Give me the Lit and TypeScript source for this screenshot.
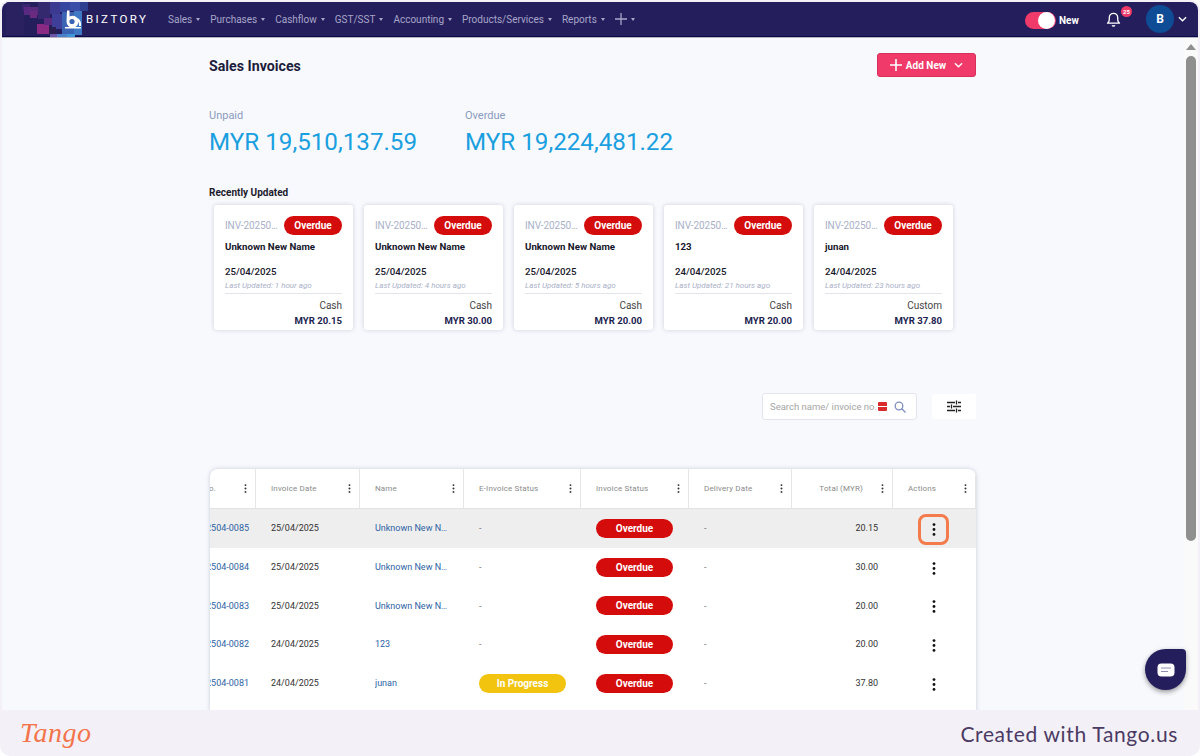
import { LitElement, html, css, svg } from "lit";
import { customElement } from "lit/decorators.js";

const NAV = ["Sales", "Purchases", "Cashflow", "GST/SST", "Accounting", "Products/Services", "Reports"];

const CARDS = [
  { name: "Unknown New Name", date: "25/04/2025", ago: "1 hour ago", method: "Cash", total: "MYR 20.15" },
  { name: "Unknown New Name", date: "25/04/2025", ago: "4 hours ago", method: "Cash", total: "MYR 30.00" },
  { name: "Unknown New Name", date: "25/04/2025", ago: "5 hours ago", method: "Cash", total: "MYR 20.00" },
  { name: "123", date: "24/04/2025", ago: "21 hours ago", method: "Cash", total: "MYR 20.00" },
  { name: "junan", date: "24/04/2025", ago: "23 hours ago", method: "Custom", total: "MYR 37.80" },
];

const COLUMNS = ["Invoice No.", "Invoice Date", "Name", "E-Invoice Status", "Invoice Status", "Delivery Date", "Total (MYR)", "Actions"];

const ROWS = [
  { no: "INV-202504-0085", date: "25/04/2025", name: "Unknown New Name", einv: "", total: "20.15" },
  { no: "INV-202504-0084", date: "25/04/2025", name: "Unknown New Name", einv: "", total: "30.00" },
  { no: "INV-202504-0083", date: "25/04/2025", name: "Unknown New Name", einv: "", total: "20.00" },
  { no: "INV-202504-0082", date: "24/04/2025", name: "123", einv: "", total: "20.00" },
  { no: "INV-202504-0081", date: "24/04/2025", name: "junan", einv: "In Progress", total: "37.80" },
];

// logo backdrop pixels: x, y, w, h, colour
const MOSAIC: [number, number, number, number, string][] = [
  [4, 0, 18, 33, "#2a2160"], [20, 2, 8, 7, "#3a2670"], [22, 5, 14, 8, "#5a2a80"], [28, 9, 7, 7, "#6a2a80"],
  [36, 0, 12, 17, "#34286f"], [48, 0, 10, 12, "#3b3a90"], [58, 0, 10, 10, "#33459f"], [68, 0, 10, 9, "#3a4ea8"],
  [78, 0, 8, 9, "#2f3f8f"], [35, 22, 12, 10, "#8a2a82"], [42, 16, 8, 7, "#5a2a80"], [50, 12, 10, 15, "#3d3f98"],
  [47, 25, 7, 8, "#2a2050"], [60, 10, 12, 22, "#3a63b4"], [72, 9, 8, 24, "#3f79c4"], [48, 32, 7, 3, "#6a55a8"],
  [55, 32, 10, 3, "#4a80c8"], [65, 32, 8, 3, "#3f96d8"],
];

const chevron = svg`<svg class="chev" viewBox="0 0 10 6" width="9" height="6"><path d="M1 1l4 4 4-4" fill="none" stroke="currentColor" stroke-width="1.5"/></svg>`;
const kebab = svg`<svg viewBox="0 0 4 13" width="4" height="13"><circle cx="2" cy="1.6" r="1.4"/><circle cx="2" cy="6.500" r="1.4"/><circle cx="2" cy="11.400" r="1.4"/></svg>`;

@customElement("app-root")
export class AppRoot extends LitElement {
  static styles = css`
    :host {
      display: block;
      height: 756px;
      overflow: hidden;
      background: #fff;
      font-family: Roboto, "Liberation Sans", sans-serif;
    }
    .frame {
      height: 756px;
      box-sizing: border-box;
      padding: 2px 2px 0;
      background: #f3f1f7;
      border-radius: 10px;
      display: flex;
      flex-direction: column;
    }
    .screen {
      position: relative;
      height: 708px;
      display: flex;
      flex-direction: column;
      overflow: hidden;
      border-radius: 8px 8px 0 0;
      background: #f8f9fd;
    }
    .nav {
      flex: none;
      height: 35px;
      box-sizing: border-box;
      border-bottom: 1px solid #0d0a4c;
      background: #241f5c;
      display: flex;
      align-items: center;
      color: #a9a6c9;
      font-size: 10px;
      position: relative;
    }
    .mosaic {
      position: absolute;
      left: 0;
      top: 0;
    }
    .brand {
      position: relative;
      display: flex;
      align-items: center;
      margin-left: 62px;
      width: 104px;
      color: #fff;
      font-size: 11.5px;
      letter-spacing: 2.4px;
      font-weight: 400;
    }
    .brand svg {
      margin-right: 4px;
    }
    .menu {
      display: flex;
      gap: 10px;
      align-items: center;
    }
    .menu span {
      display: flex;
      align-items: center;
      gap: 4px;
    }
    .menu span::after {
      content: "";
      border: 2.5px solid transparent;
      border-top: 3px solid #a9a6c9;
      border-bottom: 0;
    }
    .menu svg {
      display: block;
    }
    .right {
      margin-left: auto;
      display: flex;
      align-items: center;
      color: #fff;
    }
    .toggle {
      width: 31px;
      height: 17px;
      margin-top: 2px;
      border-radius: 9px;
      background: #ef3a6a;
      display: flex;
      justify-content: flex-end;
      padding: 0 1px;
      box-sizing: border-box;
      align-items: center;
    }
    .toggle i {
      width: 17px;
      height: 17px;
      border-radius: 50%;
      background: #fff;
    }
    .new {
      margin: 2px 0 0 3px;
      font-weight: 700;
      font-size: 10px;
      width: 47px;
    }
    .bell {
      position: relative;
      display: flex;
    }
    .badge {
      position: absolute;
      left: 15px;
      top: -5px;
      width: 11px;
      height: 11px;
      border-radius: 50%;
      background: #ef3a6a;
      color: #fff;
      font-size: 6px;
      font-weight: 700;
      text-align: center;
      line-height: 11px;
    }
    .avatar {
      width: 28px;
      height: 28px;
      margin-left: 25px;
      border-radius: 50%;
      background: #0f4c96;
      color: #fff;
      font-size: 12px;
      font-weight: 700;
      display: flex;
      align-items: center;
      justify-content: center;
    }
    .right .chev {
      margin: 0 11px 0 4px;
    }
    .body {
      flex: 1;
      min-height: 0;
      display: flex;
      border-top: 1px solid #b5b5bf;
    }
    .main {
      flex: 1;
      min-width: 0;
      overflow: hidden;
      padding-left: 207px;
    }
    .col {
      width: 767px;
    }
    .head {
      height: 40px;
      margin-top: 15px;
      display: flex;
      align-items: flex-start;
      justify-content: space-between;
    }
    h1 {
      margin: 5px 0 0;
      font-size: 14.2px;
      line-height: 16px;
      font-weight: 700;
      color: #1c1c3c;
    }
    .add {
      width: 99px;
      height: 24px;
      box-sizing: border-box;
      border: 1px solid #d92f5c;
      border-radius: 3px;
      background: #ef3a6a;
      color: #fff;
      font-size: 10px;
      font-weight: 700;
      display: flex;
      align-items: center;
      justify-content: center;
      gap: 4px;
    }
    .add .chev {
      margin-left: 4px;
    }
    .stats {
      display: flex;
      margin-top: 16px;
    }
    .stat {
      width: 256px;
    }
    .stat label {
      display: block;
      font-size: 11px;
      line-height: 13px;
      color: #8a9bbd;
    }
    .stat b {
      display: block;
      margin-top: 5px;
      font-size: 24.2px;
      line-height: 30px;
      font-weight: 400;
      color: #1a9fe0;
    }
    h2 {
      margin: 30px 0 0;
      font-size: 10px;
      line-height: 12px;
      font-weight: 700;
      color: #1c1c2c;
    }
    .cards {
      display: flex;
      gap: 11px;
      margin: 6px 0 0 5px;
    }
    .card {
      width: 139px;
      height: 125px;
      box-sizing: border-box;
      padding: 11px 11px 0;
      background: #fff;
      border-radius: 3px;
      box-shadow: 0 0 4px rgba(60, 70, 110, 0.22);
    }
    .top {
      display: flex;
      align-items: center;
      justify-content: space-between;
    }
    .inv {
      width: 58px;
      overflow: hidden;
      white-space: nowrap;
      text-overflow: ellipsis;
      font-size: 10px;
      letter-spacing: -0.1px;
      color: #a9b0c8;
    }
    .pill {
      display: flex;
      align-items: center;
      justify-content: center;
      flex: none;
      height: 19px;
      border-radius: 10px;
      background: #d40c0c;
      color: #fff;
      font-size: 10px;
      font-weight: 700;
    }
    .card .pill {
      width: 58px;
    }
    .card .who {
      margin-top: 5px;
      height: 13px;
      line-height: 13px;
      font-size: 9.7px;
      font-weight: 700;
      color: #16162a;
    }
    .card .date {
      margin-top: 12px;
      line-height: 13px;
      font-size: 9.7px;
      font-weight: 500;
      color: #16162a;
    }
    .card .ago {
      margin-top: 2px;
      padding-bottom: 2px;
      line-height: 11px;
      font-size: 8px;
      font-style: italic;
      color: #a9b0c8;
      border-bottom: 1px solid #e3e4ea;
    }
    .method {
      margin-top: 5px;
      text-align: right;
      font-size: 10px;
      line-height: 13px;
      color: #444;
    }
    .total {
      margin-top: 2px;
      text-align: right;
      font-size: 9.6px;
      line-height: 13px;
      font-weight: 700;
      color: #1c2350;
    }
    .tools {
      display: flex;
      align-items: center;
      justify-content: flex-end;
      margin-top: 63px;
    }
    .search {
      width: 155px;
      height: 27px;
      box-sizing: border-box;
      padding: 0 10px 0 7px;
      display: flex;
      align-items: center;
      background: #fff;
      border: 1px solid #e2e5ee;
      border-radius: 3px;
      color: #a5a5a5;
      font-size: 9.5px;
      white-space: nowrap;
    }
    .search .red {
      flex: none;
      width: 9px;
      height: 9px;
      margin-left: 1px;
      border-radius: 1px;
      background: linear-gradient(#d92b2b 40%, #fff 40%, #fff 55%, #d92b2b 55%);
    }
    .search svg {
      margin-left: auto;
    }
    .filter {
      width: 44px;
      height: 25px;
      margin-left: 15px;
      background: #fff;
      border-radius: 2px;
      display: flex;
      align-items: center;
      justify-content: center;
    }
    .table {
      margin: 49px 0 0 1px;
      padding-bottom: 20px;
      width: 766px;
      background: #fff;
      border-radius: 8px 8px 0 0;
      box-shadow: 0 0 4px rgba(60, 70, 110, 0.25);
      display: grid;
      grid-template-columns: 46px 104px 104px 117px 108px 103px 101px 83px;
      overflow: hidden;
      font-size: 9px;
    }
    .th {
      height: 40px;
      box-sizing: border-box;
      display: flex;
      align-items: center;
      justify-content: space-between;
      padding: 0 8px 0 15px;
      border-right: 1px solid #e6e6e6;
      border-bottom: 1px solid #e2e2e2;
      color: #8b8b8b;
      font-size: 8px;
      letter-spacing: 0.15px;
      white-space: nowrap;
    }
    .th:last-child {
      border-right: 0;
      padding-left: 14px;
      padding-right: 9px;
    }
    .th svg {
      fill: #333;
      flex: none;
      width: 3px;
      height: 9px;
    }
    .th.first {
      justify-content: flex-end;
      overflow: hidden;
      padding: 0 8px 0 0;
      gap: 28px;
    }
    .th.num span {
      margin-left: auto;
      margin-right: 18px;
    }
    .td {
      height: 38.7px;
      display: flex;
      align-items: center;
      padding-left: 15px;
      box-sizing: border-box;
      color: #333;
      white-space: nowrap;
      min-width: 0;
    }
    .hot {
      background: #eeeeee;
    }
    .td.no {
      justify-content: flex-end;
      overflow: hidden;
      padding: 0 7px 0 0;
      color: #2d62a5;
    }
    .td.name span {
      display: block;
      width: 73px;
      overflow: hidden;
      text-overflow: ellipsis;
      color: #2d62a5;
    }
    .td.muted {
      color: #777;
    }
    .td.amount {
      justify-content: flex-end;
      padding: 0 15px 0 0;
    }
    .td.act {
      justify-content: center;
      padding: 0 2px 0 0;
    }
    .td .pill {
      width: 77px;
    }
    .pill.progress {
      width: 87px !important;
      background: #f2c40f;
    }
    .kebab {
      width: 31px;
      height: 31px;
      display: flex;
      align-items: center;
      justify-content: center;
      box-sizing: border-box;
      margin-top: 2px;
    }
    .kebab svg {
      fill: #111;
    }
    .kebab.mark {
      border: 3.5px solid #f47b4b;
      border-radius: 8px;
    }
    .bar {
      flex: none;
      width: 14px;
      background: #fafafa;
      display: flex;
      flex-direction: column;
      align-items: center;
      padding-top: 6px;
      box-sizing: border-box;
    }
    .arrow {
      border: 5px solid transparent;
      border-bottom: 6px solid #8f8f8f;
      border-top: 0;
    }
    .thumb {
      width: 10px;
      height: 485px;
      margin-top: 6px;
      border-radius: 5px;
      background: #8f8f8f;
    }
    .chat {
      position: absolute;
      left: 1143px;
      top: 647px;
      width: 41px;
      height: 41px;
      border-radius: 50% 4px 50% 50%;
      background: #241f5c;
      box-shadow: 0 2px 5px rgba(0, 0, 0, 0.4);
      display: flex;
      align-items: center;
      justify-content: center;
    }
    .foot {
      flex: 1;
      display: flex;
      align-items: center;
      justify-content: space-between;
      padding: 0 20px 0 18px;
    }
    .tango {
      font-family: "Liberation Serif", serif;
      font-style: italic;
      font-size: 28px;
      line-height: 46px;
      color: #f4744c;
      font-weight: 400;
      letter-spacing: 0.5px;
    }
    .credit {
      font-family: Lato, "Open Sans", sans-serif;
      font-size: 21px;
      letter-spacing: 0.65px;
      color: #4b3a63;
    }
  `;

  renderCard(c: (typeof CARDS)[number]) {
    return html`<div class="card">
      <div class="top">
        <span class="inv">INV-202504-0085</span>
        <span class="pill">Overdue</span>
      </div>
      <div class="who">${c.name}</div>
      <div class="date">${c.date}</div>
      <div class="ago">Last Updated: ${c.ago}</div>
      <div class="method">${c.method}</div>
      <div class="total">${c.total}</div>
    </div>`;
  }

  renderRow(r: (typeof ROWS)[number], i: number) {
    const hot = i === 0 ? "hot" : "";
    return html`
      <div class="td no ${hot}">${r.no}</div>
      <div class="td ${hot}">${r.date}</div>
      <div class="td name ${hot}"><span>${r.name}</span></div>
      <div class="td muted ${hot}">
        ${r.einv ? html`<span class="pill progress">${r.einv}</span>` : "-"}
      </div>
      <div class="td ${hot}"><span class="pill">Overdue</span></div>
      <div class="td muted ${hot}">-</div>
      <div class="td amount ${hot}">${r.total}</div>
      <div class="td act ${hot}">
        <div class="kebab ${i === 0 ? "mark" : ""}">${kebab}</div>
      </div>
    `;
  }

  render() {
    return html`<div class="frame">
      <div class="screen">
        <div class="nav">
          <svg class="mosaic" width="90" height="35" viewBox="0 0 90 35">
            ${MOSAIC.map(([x, y, w, h, c]) => svg`<rect x=${x} y=${y} width=${w} height=${h} fill=${c} />`)}
          </svg>
          <div class="brand">
            <svg width="18" height="20" viewBox="0 0 18 20">
              <path d="M3 1.5h2.5v6a6 6 0 1 1-3 5z" fill="#fff" />
              <circle cx="8" cy="12.5" r="2.6" fill="#3a63b4" />
              <path d="M13 9c3 1 4.500 4 4 8h-2c.3-3-.6-5-2.600-6z" fill="#fff" />
              <path d="M1 18h16v1.500H1z" fill="#fff" />
            </svg>
            BIZTORY
          </div>
          <div class="menu">
            ${NAV.map((n) => html`<span>${n}</span>`)}
            <span>
              <svg width="12" height="12" viewBox="0 0 12 12">
                <path d="M6 0v12M0 6h12" stroke="#a9a6c9" stroke-width="1.300" />
              </svg>
            </span>
          </div>
          <div class="right">
            <div class="toggle"><i></i></div>
            <div class="new">New</div>
            <div class="bell">
              <svg width="15" height="16" viewBox="0 0 15 16" fill="none" stroke="#fff" stroke-width="1.300">
                <path d="M1.500 12.200c1.200-1 1.800-2 1.800-3.700V6.500a4.200 4.200 0 0 1 8.400 0v2c0 1.700.6 2.700 1.800 3.700z" stroke-linejoin="round" />
                <path d="M6 14.300c.7.900 2.300.9 3 0" />
              </svg>
              <span class="badge">25</span>
            </div>
            <div class="avatar">B</div>
            ${chevron}
          </div>
        </div>
        <div class="body">
          <div class="main">
            <div class="col">
              <div class="head">
                <h1>Sales Invoices</h1>
                <div class="add">
                  <svg width="12" height="12" viewBox="0 0 12 12">
                    <path d="M6 0v12M0 6h12" stroke="#fff" stroke-width="1.600" />
                  </svg>
                  Add New ${chevron}
                </div>
              </div>
              <div class="stats">
                <div class="stat"><label>Unpaid</label><b>MYR 19,510,137.59</b></div>
                <div class="stat"><label>Overdue</label><b>MYR 19,224,481.22</b></div>
              </div>
              <h2>Recently Updated</h2>
              <div class="cards">${CARDS.map((c) => this.renderCard(c))}</div>
              <div class="tools">
                <div class="search">
                  Search name/ invoice no.<span class="red"></span>
                  <svg width="12" height="12" viewBox="0 0 12 12" fill="none" stroke="#7f8fc0" stroke-width="1.300">
                    <circle cx="5" cy="5" r="3.800" />
                    <path d="M7.800 7.800l3.700 3.700" />
                  </svg>
                </div>
                <div class="filter">
                  <svg width="14" height="13" viewBox="0 0 14 13" stroke="#222" stroke-width="1.300" fill="none">
                    <path d="M0 2.500h8M11 2.500h3M9.500 .5v4M0 6.500h3M6 6.500h8M4.500 4.500v4M0 10.500h8M11 10.500h3M9.500 8.500v4" />
                  </svg>
                </div>
              </div>
              <div class="table">
                ${COLUMNS.map((c, i) => html`<div class="th ${i === 0 ? "first" : ""} ${i === 6 ? "num" : ""}">
                  <span>${c}</span>${kebab}
                </div>`)}
                ${ROWS.map((r, i) => this.renderRow(r, i))}
              </div>
            </div>
          </div>
          <div class="bar"><div class="arrow"></div><div class="thumb"></div></div>
        </div>
        <div class="chat">
          <svg width="18" height="14" viewBox="0 0 18 14">
            <rect x="0.500" y="0.500" width="17" height="13" rx="4" fill="#fff" />
            <path d="M4 5h10M4 8.500h7" stroke="#8f8cb5" stroke-width="1" />
          </svg>
        </div>
      </div>
      <div class="foot">
        <span class="tango">Tango</span>
        <span class="credit">Created with Tango.us</span>
      </div>
    </div>`;
  }
}
